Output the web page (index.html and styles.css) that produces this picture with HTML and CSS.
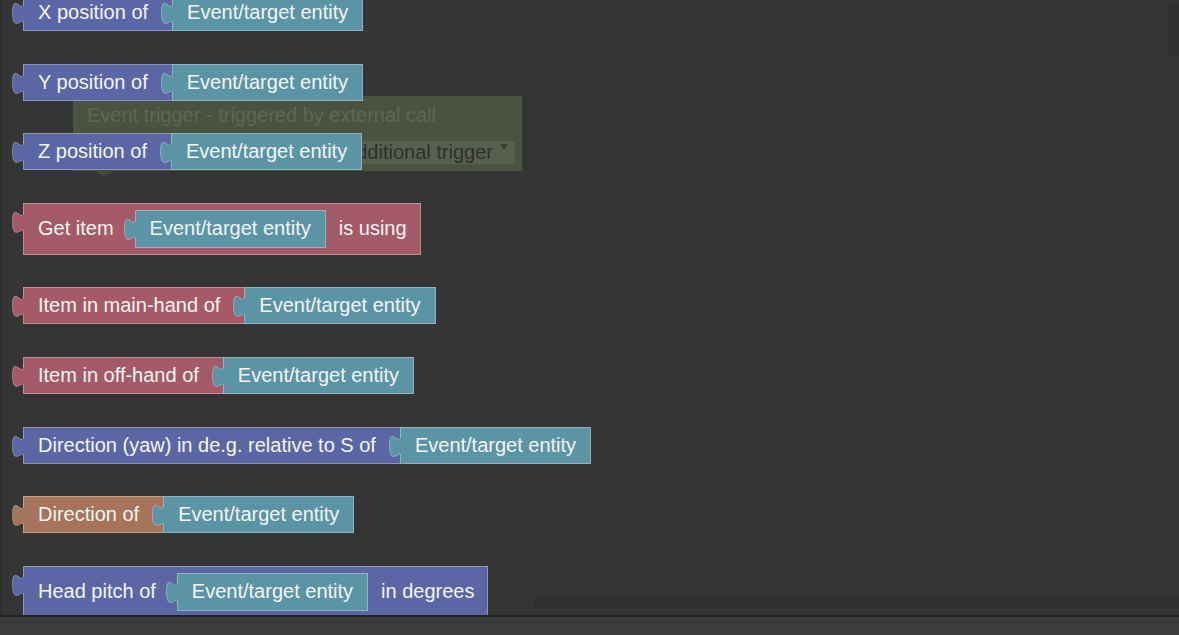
FILE: index.html
```html
<!DOCTYPE html>
<html>
<head>
<meta charset="utf-8">
<link rel="stylesheet" href="styles.css">
</head>
<body>
<div class="app">
  <div class="ws">
    <div class="ghost">
      <div class="ghost-title">Event trigger - triggered by external call</div>
      <div class="ghost-row">
        <div class="dropdown">Additional trigger<svg class="arrow" width="8" height="6" viewBox="0 0 8 6"><path d="M0,0 L8,0 L4,6 Z"/></svg></div>
      </div>
      <svg class="notch" width="22" height="6" viewBox="0 0 22 6"><path d="M0,0 L8.4,5.6 L12.6,5.6 L21,0 Z"/></svg>
    </div>

    <div class="stack">
      <div class="blk">
        <div class="seg purple"><svg class="tab" width="13" height="22" viewBox="0 0 13 22"><path class="f" d="M11.5,0 C11.5,14 0.5,-11 0.5,10.5 S11.5,14 11.5,21 L13,21 L13,0 Z"/><path class="s" d="M11.5,0 C11.5,14 0.5,-11 0.5,10.5 S11.5,14 11.5,21"/></svg><span>X position of</span></div>
        <div class="seg teal"><svg class="tab" width="13" height="22" viewBox="0 0 13 22"><path class="f" d="M11.5,0 C11.5,14 0.5,-11 0.5,10.5 S11.5,14 11.5,21 L13,21 L13,0 Z"/><path class="s" d="M11.5,0 C11.5,14 0.5,-11 0.5,10.5 S11.5,14 11.5,21"/></svg><span>Event/target entity</span></div>
      </div>

      <div class="blk">
        <div class="seg purple"><svg class="tab" width="13" height="22" viewBox="0 0 13 22"><path class="f" d="M11.5,0 C11.5,14 0.5,-11 0.5,10.5 S11.5,14 11.5,21 L13,21 L13,0 Z"/><path class="s" d="M11.5,0 C11.5,14 0.5,-11 0.5,10.5 S11.5,14 11.5,21"/></svg><span>Y position of</span></div>
        <div class="seg teal"><svg class="tab" width="13" height="22" viewBox="0 0 13 22"><path class="f" d="M11.5,0 C11.5,14 0.5,-11 0.5,10.5 S11.5,14 11.5,21 L13,21 L13,0 Z"/><path class="s" d="M11.5,0 C11.5,14 0.5,-11 0.5,10.5 S11.5,14 11.5,21"/></svg><span>Event/target entity</span></div>
      </div>

      <div class="blk">
        <div class="seg purple"><svg class="tab" width="13" height="22" viewBox="0 0 13 22"><path class="f" d="M11.5,0 C11.5,14 0.5,-11 0.5,10.5 S11.5,14 11.5,21 L13,21 L13,0 Z"/><path class="s" d="M11.5,0 C11.5,14 0.5,-11 0.5,10.5 S11.5,14 11.5,21"/></svg><span>Z position of</span></div>
        <div class="seg teal"><svg class="tab" width="13" height="22" viewBox="0 0 13 22"><path class="f" d="M11.5,0 C11.5,14 0.5,-11 0.5,10.5 S11.5,14 11.5,21 L13,21 L13,0 Z"/><path class="s" d="M11.5,0 C11.5,14 0.5,-11 0.5,10.5 S11.5,14 11.5,21"/></svg><span>Event/target entity</span></div>
      </div>

      <div class="blk">
        <div class="seg tall red"><svg class="tab" width="13" height="22" viewBox="0 0 13 22"><path class="f" d="M11.5,0 C11.5,14 0.5,-11 0.5,10.5 S11.5,14 11.5,21 L13,21 L13,0 Z"/><path class="s" d="M11.5,0 C11.5,14 0.5,-11 0.5,10.5 S11.5,14 11.5,21"/></svg><span>Get item</span>
          <div class="inp teal"><svg class="tab" width="13" height="22" viewBox="0 0 13 22"><path class="f" d="M11.5,0 C11.5,14 0.5,-11 0.5,10.5 S11.5,14 11.5,21 L13,21 L13,0 Z"/><path class="s" d="M11.5,0 C11.5,14 0.5,-11 0.5,10.5 S11.5,14 11.5,21"/></svg><span>Event/target entity</span></div>
          <span>is using</span>
        </div>
      </div>

      <div class="blk">
        <div class="seg red"><svg class="tab" width="13" height="22" viewBox="0 0 13 22"><path class="f" d="M11.5,0 C11.5,14 0.5,-11 0.5,10.5 S11.5,14 11.5,21 L13,21 L13,0 Z"/><path class="s" d="M11.5,0 C11.5,14 0.5,-11 0.5,10.5 S11.5,14 11.5,21"/></svg><span>Item in main-hand of</span></div>
        <div class="seg teal"><svg class="tab" width="13" height="22" viewBox="0 0 13 22"><path class="f" d="M11.5,0 C11.5,14 0.5,-11 0.5,10.5 S11.5,14 11.5,21 L13,21 L13,0 Z"/><path class="s" d="M11.5,0 C11.5,14 0.5,-11 0.5,10.5 S11.5,14 11.5,21"/></svg><span>Event/target entity</span></div>
      </div>

      <div class="blk">
        <div class="seg red"><svg class="tab" width="13" height="22" viewBox="0 0 13 22"><path class="f" d="M11.5,0 C11.5,14 0.5,-11 0.5,10.5 S11.5,14 11.5,21 L13,21 L13,0 Z"/><path class="s" d="M11.5,0 C11.5,14 0.5,-11 0.5,10.5 S11.5,14 11.5,21"/></svg><span>Item in off-hand of</span></div>
        <div class="seg teal"><svg class="tab" width="13" height="22" viewBox="0 0 13 22"><path class="f" d="M11.5,0 C11.5,14 0.5,-11 0.5,10.5 S11.5,14 11.5,21 L13,21 L13,0 Z"/><path class="s" d="M11.5,0 C11.5,14 0.5,-11 0.5,10.5 S11.5,14 11.5,21"/></svg><span>Event/target entity</span></div>
      </div>

      <div class="blk">
        <div class="seg purple"><svg class="tab" width="13" height="22" viewBox="0 0 13 22"><path class="f" d="M11.5,0 C11.5,14 0.5,-11 0.5,10.5 S11.5,14 11.5,21 L13,21 L13,0 Z"/><path class="s" d="M11.5,0 C11.5,14 0.5,-11 0.5,10.5 S11.5,14 11.5,21"/></svg><span>Direction (yaw) in de.g. relative to S of</span></div>
        <div class="seg teal"><svg class="tab" width="13" height="22" viewBox="0 0 13 22"><path class="f" d="M11.5,0 C11.5,14 0.5,-11 0.5,10.5 S11.5,14 11.5,21 L13,21 L13,0 Z"/><path class="s" d="M11.5,0 C11.5,14 0.5,-11 0.5,10.5 S11.5,14 11.5,21"/></svg><span>Event/target entity</span></div>
      </div>

      <div class="blk">
        <div class="seg brown"><svg class="tab" width="13" height="22" viewBox="0 0 13 22"><path class="f" d="M11.5,0 C11.5,14 0.5,-11 0.5,10.5 S11.5,14 11.5,21 L13,21 L13,0 Z"/><path class="s" d="M11.5,0 C11.5,14 0.5,-11 0.5,10.5 S11.5,14 11.5,21"/></svg><span>Direction of</span></div>
        <div class="seg teal"><svg class="tab" width="13" height="22" viewBox="0 0 13 22"><path class="f" d="M11.5,0 C11.5,14 0.5,-11 0.5,10.5 S11.5,14 11.5,21 L13,21 L13,0 Z"/><path class="s" d="M11.5,0 C11.5,14 0.5,-11 0.5,10.5 S11.5,14 11.5,21"/></svg><span>Event/target entity</span></div>
      </div>

      <div class="blk">
        <div class="seg tall purple"><svg class="tab" width="13" height="22" viewBox="0 0 13 22"><path class="f" d="M11.5,0 C11.5,14 0.5,-11 0.5,10.5 S11.5,14 11.5,21 L13,21 L13,0 Z"/><path class="s" d="M11.5,0 C11.5,14 0.5,-11 0.5,10.5 S11.5,14 11.5,21"/></svg><span>Head pitch of</span>
          <div class="inp teal"><svg class="tab" width="13" height="22" viewBox="0 0 13 22"><path class="f" d="M11.5,0 C11.5,14 0.5,-11 0.5,10.5 S11.5,14 11.5,21 L13,21 L13,0 Z"/><path class="s" d="M11.5,0 C11.5,14 0.5,-11 0.5,10.5 S11.5,14 11.5,21"/></svg><span>Event/target entity</span></div>
          <span>in degrees</span>
        </div>
      </div>
    </div>

    <div class="vscroll"></div>
    <div class="hscroll"></div>
  </div>
  <div class="bar"></div>
</div>
</body>
</html>
```

FILE: styles.css
```css
html, body {
  margin: 0;
  padding: 0;
  background: #353535;
  overflow: hidden;
}

body {
  font-family: "Liberation Sans", Arial, sans-serif;
}

.app {
  width: 1179px;
  height: 635px;
  display: flex;
  flex-direction: column;
}

.ws {
  position: relative;
  height: 615px;
  flex: none;
  overflow: hidden;
  background: #353535;
  border-left: 2px solid #2d2d2d;
  box-sizing: border-box;
}

.bar {
  flex: 1;
  background: #3c3c3c;
  border-top: 2px solid #222222;
}

.stack {
  display: flex;
  flex-direction: column;
  align-items: flex-start;
  gap: 32.6px;
  margin-top: -6px;
  padding-left: 21px;
}

.blk {
  display: flex;
  align-items: flex-start;
}

.seg {
  position: relative;
  display: flex;
  align-items: center;
  height: 37px;
  box-sizing: border-box;
  border: 1px solid rgba(255, 255, 255, 0.3);
  background: var(--c);
  color: #f4f4f4;
  font-size: 20px;
  white-space: nowrap;
}

.seg:first-child {
  padding: 0 24px 0 14px;
  border-right: 0;
}

.seg.teal {
  padding: 0 14px;
}

.seg.tall {
  height: 52px;
  padding: 0 13px 0 14px;
  border-right: 1px solid rgba(255, 255, 255, 0.3);
}

.inp {
  position: relative;
  display: flex;
  align-items: center;
  height: 38px;
  box-sizing: border-box;
  margin: 0 13px 0 21px;
  padding: 0 14px;
  border: 1px solid rgba(255, 255, 255, 0.3);
  background: var(--c);
}

.purple { --c: #5b67a5; }
.teal   { --c: #5b95a5; }
.red    { --c: #a55b67; }
.brown  { --c: #a5745b; }

.tab {
  position: absolute;
  left: -12px;
  top: 7px;
  overflow: visible;
}

.tab .f {
  fill: var(--c);
}

.tab .s {
  fill: none;
  stroke: rgba(255, 255, 255, 0.3);
  stroke-width: 1;
}

/* ghost event block behind the stack */
.ghost {
  position: absolute;
  left: 71px;
  top: 96px;
  width: 449px;
  height: 75px;
  box-sizing: border-box;
  padding: 8px 7px 0 14px;
  background: #4a5340;
  display: flex;
  flex-direction: column;
  font-size: 20px;
}

.ghost-title {
  height: 22px;
  line-height: 22px;
  color: #5f6559;
  white-space: nowrap;
}

.ghost-row {
  display: flex;
  justify-content: flex-end;
  margin-top: 15px;
}

.dropdown {
  position: relative;
  height: 23px;
  line-height: 23px;
  padding: 0 22px 0 10px;
  border-radius: 4px;
  background: #585f4f;
  color: #2f2f2f;
  white-space: nowrap;
}

.arrow {
  position: absolute;
  right: 7px;
  top: 3px;
}

.arrow path {
  fill: #34402f;
}

.notch {
  position: absolute;
  left: 21px;
  bottom: -5px;
}

.notch path {
  fill: #434c3a;
}

.vscroll {
  position: absolute;
  right: 0;
  top: 5px;
  width: 11px;
  height: 52px;
  background: #303030;
}

.hscroll {
  position: absolute;
  left: 531px;
  top: 597px;
  right: 0;
  height: 11px;
  background: #303030;
}
```
